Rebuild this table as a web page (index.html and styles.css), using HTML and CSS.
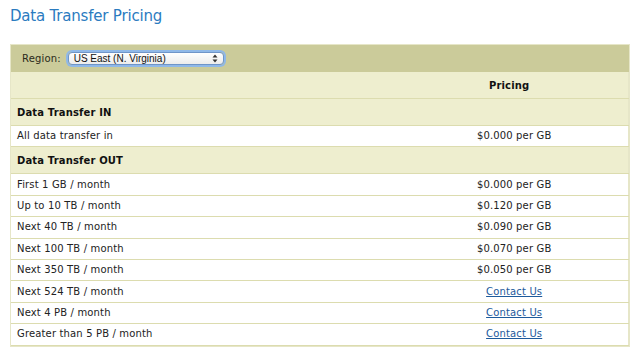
FILE: index.html
```html
<!DOCTYPE html>
<html lang="en">
<head>
<meta charset="utf-8">
<title>Data Transfer Pricing</title>
<link rel="stylesheet" href="styles.css">
</head>
<body>
<h1 class="title">Data Transfer Pricing</h1>
<div class="pricing">
  <div class="region-bar">
    <label class="region-label" for="region">Region:</label>
    <span class="select-wrap">
      <select id="region" class="region-select">
        <option>US East (N. Virginia)</option>
        <option>US West (Oregon)</option>
        <option>EU (Ireland)</option>
      </select>
      <svg class="select-arrows" width="6" height="9" viewBox="0 0 6 9" aria-hidden="true">
        <path d="M3 0.5 L5.5 3.5 L0.5 3.5 Z M3 8.5 L5.5 5.5 L0.5 5.5 Z" fill="#333"/>
      </svg>
    </span>
  </div>
  <table class="price-table">
    <colgroup>
      <col class="col-tier">
      <col class="col-price">
    </colgroup>
    <thead>
      <tr class="head-row">
        <th></th>
        <th class="price-head">Pricing</th>
      </tr>
    </thead>
    <tbody>
      <tr class="section-row"><th colspan="2">Data Transfer IN</th></tr>
      <tr class="data-row"><td>All data transfer in</td><td class="price">$0.000 per GB</td></tr>
      <tr class="section-row"><th colspan="2">Data Transfer OUT</th></tr>
      <tr class="data-row"><td>First 1 GB / month</td><td class="price">$0.000 per GB</td></tr>
      <tr class="data-row"><td>Up to 10 TB / month</td><td class="price">$0.120 per GB</td></tr>
      <tr class="data-row"><td>Next 40 TB / month</td><td class="price">$0.090 per GB</td></tr>
      <tr class="data-row"><td>Next 100 TB / month</td><td class="price">$0.070 per GB</td></tr>
      <tr class="data-row"><td>Next 350 TB / month</td><td class="price">$0.050 per GB</td></tr>
      <tr class="data-row"><td>Next 524 TB / month</td><td class="price"><a href="#contact">Contact Us</a></td></tr>
      <tr class="data-row"><td>Next 4 PB / month</td><td class="price"><a href="#contact">Contact Us</a></td></tr>
      <tr class="data-row"><td>Greater than 5 PB / month</td><td class="price"><a href="#contact">Contact Us</a></td></tr>
    </tbody>
  </table>
</div>
</body>
</html>
```

FILE: styles.css
```css
html, body {
  margin: 0;
  padding: 0;
  background: #ffffff;
}

body {
  padding: 7px 10px 0 10px;
  font-family: "DejaVu Sans", Verdana, sans-serif;
  font-size: 10px;
  letter-spacing: 0.15px;
  color: #222222;
}

.title {
  margin: 0 0 19px 0;
  font-size: 15px;
  line-height: 18px;
  font-weight: normal;
  letter-spacing: -0.2px;
  color: #2b7bbf;
}

.pricing {
  width: 618px;
  border: 1px solid #e6e6c8;
  background: #ffffff;
}

.region-bar {
  display: flex;
  align-items: center;
  height: 27px;
  padding-left: 11px;
  background: #cbcb9a;
}

.region-label {
  color: #2a2a1a;
  margin-right: 7px;
}

.select-wrap {
  position: relative;
  display: inline-block;
}

.region-select {
  appearance: none;
  -webkit-appearance: none;
  display: block;
  width: 156px;
  height: 13px;
  margin: 0;
  padding: 0 0 0 5px;
  border: 1px solid #6f95c8;
  border-radius: 4px;
  box-shadow: 0 0 0 2px #8fb8e8;
  background: linear-gradient(#ffffff, #ececec);
  font-family: "Liberation Sans", Arial, sans-serif;
  font-size: 10px;
  line-height: 11px;
  color: #111111;
  outline: none;
}

.select-arrows {
  position: absolute;
  right: 6px;
  top: 2px;
  pointer-events: none;
}

.price-table {
  width: 618px;
  border-collapse: collapse;
  table-layout: fixed;
  border-right: 1px solid #e6e6c8;
}

.col-tier {
  width: 389px;
}

.col-price {
  width: 228px;
}

.head-row th {
  height: 26px;
  padding: 0;
  background: #eeeecf;
  font-weight: bold;
  color: #111111;
}

.price-head {
  text-align: center;
  padding-right: 10px !important;
}

.section-row th {
  height: 26px;
  padding: 0 0 0 6px;
  border-top: 1px solid #dcdcaf;
  background: #eeeecf;
  text-align: left;
  font-weight: bold;
  color: #111111;
}

.data-row td {
  height: 20.4px;
  padding: 0 0 0 6px;
  border-top: 1px solid #dcdcaf;
  background: #ffffff;
  line-height: 12px;
}

.data-row td.price {
  padding: 0;
  text-align: center;
}

.data-row:last-child td {
  border-bottom: 1px solid #dcdcaf;
}

.price a {
  color: #1d5a9c;
  text-decoration: underline;
}
```
